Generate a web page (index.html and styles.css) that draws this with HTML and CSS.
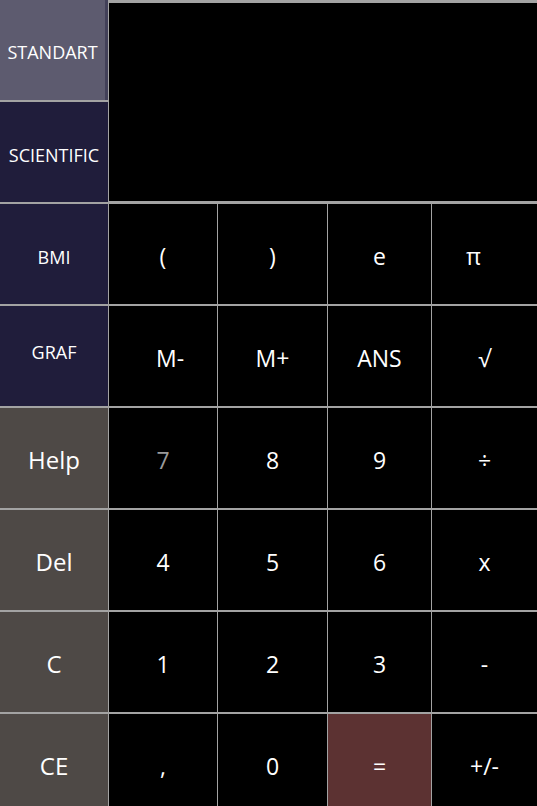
FILE: index.html
```html
<!DOCTYPE html>
<html lang="en">
<head>
<meta charset="utf-8">
<title>Calculator</title>
<link rel="stylesheet" href="styles.css">
</head>
<body>
<main class="calc">
  <button class="key mode mode-active">STANDART</button>
  <div class="display"></div>
  <button class="key mode">SCIENTIFIC</button>

  <button class="key mode">BMI</button>
  <button class="key">(</button>
  <button class="key">)</button>
  <button class="key">e</button>
  <button class="key key-pi">π</button>

  <button class="key mode mode-graf">GRAF</button>
  <button class="key key-mminus">M-</button>
  <button class="key">M+</button>
  <button class="key">ANS</button>
  <button class="key">√</button>

  <button class="key action">Help</button>
  <button class="key key-dim">7</button>
  <button class="key">8</button>
  <button class="key">9</button>
  <button class="key">÷</button>

  <button class="key action">Del</button>
  <button class="key">4</button>
  <button class="key">5</button>
  <button class="key">6</button>
  <button class="key">x</button>

  <button class="key action">C</button>
  <button class="key">1</button>
  <button class="key">2</button>
  <button class="key">3</button>
  <button class="key">-</button>

  <button class="key action">CE</button>
  <button class="key">,</button>
  <button class="key">0</button>
  <button class="key equals">=</button>
  <button class="key">+/-</button>
</main>
</body>
</html>
```
FILE: styles.css
```css
html, body {
  margin: 0;
  padding: 0;
  background: #000;
  overflow: hidden;
  height: 806px;
}

.calc {
  display: grid;
  grid-template-columns: 108px 108px 109px 103px 1fr;
  grid-template-rows: repeat(8, 100px);
  column-gap: 1px;
  row-gap: 2px;
  background: #a3a3a3;
  width: 537px;
}

.key {
  margin: 0;
  padding: 3px 0 0;
  border: 0;
  background: #000;
  color: #fff;
  font-family: "Open Sans", "Noto Sans", sans-serif;
  font-size: 23px;
  display: flex;
  align-items: center;
  justify-content: center;
  cursor: pointer;
}

.display {
  grid-column: 2 / 6;
  grid-row: 1 / 3;
  background: #000;
  border-top: 3px solid #a3a3a3;
  border-bottom: 1px solid #a3a3a3;
}

.mode {
  background: #201d3b;
  font-size: 18px;
  padding-top: 6px;
}

.mode-active {
  background: #5d5b6f;
  border-right: 3px solid #424058;
  padding-top: 3px;
}

.mode-graf {
  padding-top: 0;
  padding-bottom: 8px;
}

.action {
  background: #4e4946;
  font-size: 24px;
}

.equals {
  background: #5c3232;
}

.key-dim {
  color: #9a9a9a;
}

.key-pi {
  padding-right: 22px;
}

.key-mminus {
  padding-left: 14px;
}
```
